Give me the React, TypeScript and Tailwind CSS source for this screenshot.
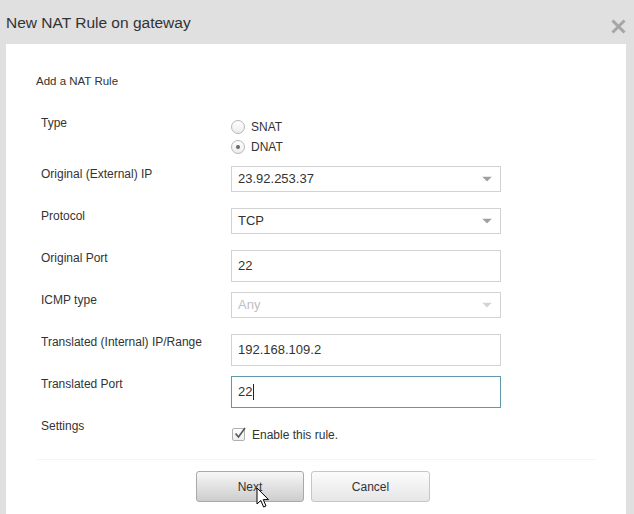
import React from "react";

const font = { fontFamily: '"Liberation Sans", Arial, sans-serif' };

function Arrow({ light }: { light?: boolean }) {
  return (
    <svg width="10" height="5" viewBox="0 0 10 5" className="absolute right-[8px] top-1/2 -translate-y-1/2">
      <path d="M0 0 L10 0 L5 5 Z" fill={light ? "#d4d4d4" : "#a0a0a0"} />
    </svg>
  );
}

function Select({ value, disabled }: { value: string; disabled?: boolean }) {
  return (
    <div className="relative h-[26px] w-[270px] border border-[#d2d2d2] bg-white flex items-center pl-[6px]">
      <span className={`text-[13px] ${disabled ? "text-[#c0c0c0]" : "text-[#333]"}`}>{value}</span>
      <Arrow light={disabled} />
    </div>
  );
}

function Input({ value, focused }: { value: string; focused?: boolean }) {
  return (
    <div
      className={`h-[32px] w-[270px] border bg-white flex items-center pl-[6px] ${
        focused ? "border-[#5f98ab]" : "border-[#d2d2d2]"
      }`}
    >
      <span className="text-[13px] text-[#333]">{value}</span>
      {focused && <span className="ml-[1px] w-px h-[16px] bg-[#222]" />}
    </div>
  );
}

function Row({ label, children, h = "h-[42px]" }: { label: string; children: React.ReactNode; h?: string }) {
  return (
    <div className={`flex items-start ${h}`}>
      <div className="w-[190px] pt-[1px] text-[12px] leading-[14px] text-[#333]">{label}</div>
      <div>{children}</div>
    </div>
  );
}

function Radio({ checked, label }: { checked?: boolean; label: string }) {
  return (
    <div className="flex items-center h-[20px]">
      <div className="w-[14px] h-[14px] rounded-full border border-[#b8b8b8] bg-gradient-to-b from-white to-[#ececec] flex items-center justify-center">
        {checked && <div className="w-[4px] h-[4px] rounded-full bg-[#6a6a6a]" />}
      </div>
      <span className="ml-[6px] text-[12px] text-[#333]">{label}</span>
    </div>
  );
}

export default function App() {
  return (
    <div className="w-[634px] h-[514px] bg-[#e0e0e0] flex flex-col overflow-hidden relative" style={font}>
      <div className="h-[44px] flex items-start justify-between pl-[6px] pr-[8px] shrink-0">
        <span className="mt-[14px] text-[15.5px] leading-[18px] text-[#333]">New NAT Rule on gateway</span>
        <svg width="15" height="15" viewBox="0 0 15 15" className="mt-[19px]">
          <path d="M1.5 1.5 L13.5 13.5 M13.5 1.5 L1.5 13.5" stroke="#a6a6a6" strokeWidth="3" />
        </svg>
      </div>
      <div className="ml-[6px] mr-[8px] flex-1 bg-white pt-[30px]">
        <div className="pl-[30px] text-[11.5px] leading-[14px] text-[#333]">Add a NAT Rule</div>
        <div className="mt-[27px] pl-[35px]">
          <Row label="Type" h="h-[51px]">
            <div className="pt-[2px]">
              <Radio label="SNAT" />
              <Radio label="DNAT" checked />
            </div>
          </Row>
          <Row label="Original (External) IP">
            <Select value="23.92.253.37" />
          </Row>
          <Row label="Protocol">
            <Select value="TCP" />
          </Row>
          <Row label="Original Port">
            <Input value="22" />
          </Row>
          <Row label="ICMP type">
            <Select value="Any" disabled />
          </Row>
          <Row label="Translated (Internal) IP/Range">
            <Input value="192.168.109.2" />
          </Row>
          <Row label="Translated Port">
            <Input value="22" focused />
          </Row>
          <Row label="Settings" h="h-[41px]">
            <div className="mt-[10px] flex items-center h-[13px] pl-[1px]">
              <div className="w-[13px] h-[13px] border border-[#b0b0b0] bg-gradient-to-b from-white to-[#eeeeee] rounded-[2px] relative">
                <svg width="14" height="14" viewBox="0 0 14 14" className="absolute -top-[3px] left-0">
                  <path d="M2.5 7.5 L5.5 11 L12 2" stroke="#555" strokeWidth="1.6" fill="none" />
                </svg>
              </div>
              <span className="ml-[7px] text-[12px] text-[#333]">Enable this rule.</span>
            </div>
          </Row>
        </div>
        <div className="ml-[31px] mr-[30px] h-px bg-[#f5f5f5]" />
        <div className="mt-[11px] flex justify-center gap-[7px] pr-[6px]">
          <button className="w-[108px] h-[31px] rounded-[3px] border border-[#a9a9a9] bg-gradient-to-b from-[#f7f7f7] to-[#cdcdcd] text-[12px] text-[#333]">
            Next
          </button>
          <button className="w-[119px] h-[31px] rounded-[3px] border border-[#c6c6c6] bg-gradient-to-b from-[#fcfcfc] to-[#e6e6e6] text-[12px] text-[#333]">
            Cancel
          </button>
        </div>
      </div>
      <svg width="14" height="22" viewBox="0 0 14 22" className="absolute left-[256px] top-[487px]">
        <path d="M1 1 L1 17 L4.8 13.4 L7.6 20 L10 19 L7.3 12.6 L12.5 12.6 Z" fill="#fff" stroke="#000" strokeWidth="1" strokeLinejoin="round" />
      </svg>
    </div>
  );
}
